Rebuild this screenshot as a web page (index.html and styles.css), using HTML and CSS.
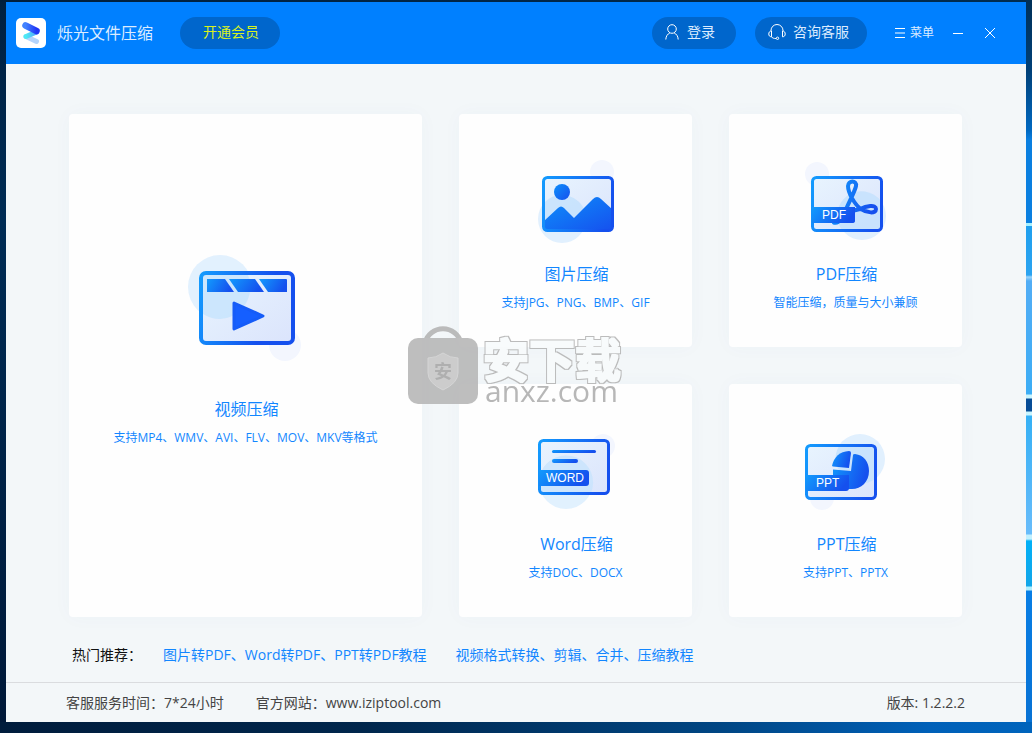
FILE: index.html
```html
<!DOCTYPE html>
<html lang="zh-CN">
<head>
<meta charset="utf-8">
<meta name="viewport" content="width=device-width, initial-scale=1">
<title>烁光文件压缩</title>
<link rel="stylesheet" href="styles.css">
</head>
<body>
<svg class="defs" width="0" height="0" aria-hidden="true">
  <defs>
    <linearGradient id="blue" x1="0" y1="0" x2="1" y2="0.3"><stop offset="0" stop-color="#129bfd"/><stop offset="1" stop-color="#1550ee"/></linearGradient>
    <linearGradient id="frame" gradientUnits="userSpaceOnUse" x1="0" y1="0" x2="72" y2="20"><stop offset="0" stop-color="#139dfe"/><stop offset="1" stop-color="#1550ee"/></linearGradient>
    <linearGradient id="deep" x1="0" y1="0" x2="1" y2="1"><stop offset="0" stop-color="#0d90fb"/><stop offset="1" stop-color="#1650ee"/></linearGradient>
    <linearGradient id="pale" x1="0" y1="0" x2="1" y2="1"><stop offset="0" stop-color="#e8f4fe"/><stop offset="1" stop-color="#dbe4fc"/></linearGradient>
    <filter id="outline" x="-5%" y="-10%" width="110%" height="120%" color-interpolation-filters="sRGB">
      <feMorphology in="SourceAlpha" operator="dilate" radius="2" result="outer"/>
      <feMorphology in="SourceGraphic" operator="dilate" radius="1" result="inner"/>
      <feFlood flood-color="#b5b5b5"/>
      <feComposite in2="outer" operator="in" result="edge"/>
      <feMerge><feMergeNode in="edge"/><feMergeNode in="inner"/></feMerge>
    </filter>
  </defs>
</svg>
<div class="window">
  <header class="titlebar">
    <svg class="logo" viewBox="0 0 30 30" width="30" height="30" aria-hidden="true">
      <defs>
        <linearGradient id="logo-a" x1="0" x2="1"><stop offset="0" stop-color="#4283ff"/><stop offset="1" stop-color="#2036f5"/></linearGradient>
        <linearGradient id="logo-b" x1="0" x2="1"><stop offset="0" stop-color="#4deaf4"/><stop offset="1" stop-color="#55a4fb"/></linearGradient>
      </defs>
      <rect width="30" height="30" rx="5" fill="#fff"/>
      <path d="M10 18.500 20.500 23.500" stroke="#b4d4fc" stroke-width="5" stroke-linecap="round"/>
      <path d="M10 18.500 20.500 14" stroke="url(#logo-b)" stroke-width="5" stroke-linecap="round"/>
      <path d="M9.500 7.500 20.500 13" stroke="url(#logo-a)" stroke-width="6.500" stroke-linecap="round"/>
    </svg>
    <h1 class="app-name">烁光文件压缩</h1>
    <button class="pill vip" type="button">开通会员</button>
    <button class="pill login" type="button">
      <svg width="14" height="16" viewBox="0 0 14 16" class="line-icon" aria-hidden="true"><circle cx="7" cy="5" r="4.300"/><path d="M.8 15.500c.2-3.300 1.700-5.500 4-6.500M13.200 15.500c-.2-3.300-1.700-5.500-4-6.500"/></svg>
      登录
    </button>
    <button class="pill support" type="button">
      <svg width="18" height="16" viewBox="0 0 18 16" class="line-icon" aria-hidden="true"><path d="M3 7V6.500a6 6 0 0 1 12 0V7M3.500 7C1.500 7 .8 8.500.8 10s.7 2.800 2.700 2.800V7ZM14.500 7c2 0 2.700 1.500 2.700 3s-.7 2.800-2.700 2.800V7ZM3.500 12.800c.8 1.300 2.400 1.700 4.500 1.700"/><circle cx="9.500" cy="14.300" r="1.200"/></svg>
      咨询客服
    </button>
    <button class="plain menu" type="button">
      <svg width="10" height="10" viewBox="0 0 10 10" class="line-icon" aria-hidden="true"><path d="M0 .5h10M0 5h10M0 9.500h10"/></svg>
      菜单
    </button>
    <button class="plain minimize" type="button" aria-label="最小化"><svg width="10" height="10" viewBox="0 0 10 10" class="line-icon" aria-hidden="true"><path d="M0 5.500h10"/></svg></button>
    <button class="plain close" type="button" aria-label="关闭"><svg width="10" height="10" viewBox="0 0 10 10" class="line-icon" aria-hidden="true"><path d="m0 0 10 10M10 0 0 10"/></svg></button>
  </header>

  <main class="content">
    <div class="cards">
      <button class="card card-video" type="button">
        <svg class="art art-video" width="116" height="108" viewBox="-11 -16 116 108" aria-hidden="true">
          <circle cx="21" cy="16" r="32" fill="#e2f1fe"/><circle cx="86" cy="74" r="16" fill="#f3f6fe"/>
          <rect x="2" y="2" width="92" height="70" rx="5" fill="url(#pale)"/>
          <path d="M4 4H49A32 32 0 0 1 21 48 32 32 0 0 1 4 43Z" fill="#c5e4fd" opacity=".8"/>
          <rect x="2" y="2" width="92" height="70" rx="5" fill="none" stroke="url(#frame)" stroke-width="4"/>
          <path d="M8 8H26L35 21H8Z" fill="url(#blue)"/><path d="M30 8H56L65 21H39Z" fill="url(#blue)"/><path d="M60 8H87Q88 8 88 9V21H69Z" fill="url(#blue)"/>
          <path d="M35 32 64 45 35 58Z" fill="#155fff" stroke="#155cf8" stroke-width="3" stroke-linejoin="round"/>
        </svg>
        <span class="card-title">视频压缩</span>
        <span class="card-note">支持MP4、WMV、AVI、FLV、MOV、MKV等格式</span>
      </button>
      <button class="card" type="button">
        <svg class="art" width="88" height="88" viewBox="-10 -16 88 88" aria-hidden="true">
          <circle cx="60" cy="-4" r="12" fill="#f3f6fe"/><circle cx="20" cy="43" r="24" fill="#e1f0fe"/>
          <rect x="1.500" y="1.500" width="69" height="53" rx="4" fill="url(#pale)"/>
          <path d="M3 26A24 24 0 0 1 43 36L42 54H3Z" fill="#c3e1fd" opacity=".8"/>
          <path d="M2 45 16 32Q19 29 22 32L32 42 51 23Q55 19 59 23L71 34V52Q71 55 68 55H4Q1 55 1 52Z" fill="url(#deep)"/>
          <rect x="1.500" y="1.500" width="69" height="53" rx="4" fill="none" stroke="url(#frame)" stroke-width="3"/>
          <circle cx="20" cy="16" r="8" fill="url(#deep)"/>
        </svg>
        <span class="card-title">图片压缩</span>
        <span class="card-note">支持JPG、PNG、BMP、GIF</span>
      </button>
      <button class="card" type="button">
        <svg class="art" width="88" height="88" viewBox="-9 -16 88 88" aria-hidden="true">
          <circle cx="6" cy="-2" r="12" fill="#f3f6fe"/><circle cx="51" cy="40" r="24" fill="#e1f0fe"/>
          <rect x="1.500" y="1.500" width="69" height="53" rx="4" fill="url(#pale)"/>
          <path d="M31 54A24 24 0 0 1 70 25V54Z" fill="#c3e1fd" opacity=".8"/>
          <rect x="1.500" y="1.500" width="69" height="53" rx="4" fill="none" stroke="url(#frame)" stroke-width="3"/>
          <path d="M22 46C28 50 33 38 36 31 39 24 44 15 45 10 46 4 37 4 37 10 37 17 44 29 50 33 56 37 65 38 65 33 65 28 55 30 49 33L33 37" fill="none" stroke="url(#blue)" stroke-width="4" stroke-linejoin="round"/>
          <path d="M1 31H44V45Q44 47 41 47H1Z" fill="url(#blue)"/>
          <text x="11" y="43" class="tag">PDF</text>
        </svg>
        <span class="card-title">PDF压缩</span>
        <span class="card-note">智能压缩，质量与大小兼顾</span>
      </button>
      <button class="card" type="button">
        <svg class="art" width="88" height="88" viewBox="-6 -9 88 88" aria-hidden="true">
          <circle cx="65" cy="7" r="12" fill="#f3f6fe"/><circle cx="28" cy="43" r="27" fill="#e1f1fe"/>
          <rect x="1.500" y="1.500" width="69" height="53" rx="4" fill="url(#pale)"/>
          <path d="M3 33A27 27 0 0 1 53 54H3Z" fill="#c8e4fd" opacity=".8"/>
          <rect x="1.500" y="1.500" width="69" height="53" rx="4" fill="none" stroke="url(#frame)" stroke-width="3"/>
          <rect x="14" y="11" width="44" height="3" rx="1.500" fill="url(#blue)"/><rect x="14" y="20" width="26" height="4" rx="2" fill="url(#blue)"/>
          <path d="M1 31H48Q51 31 51 34V44Q51 47 48 47H1Z" fill="url(#blue)"/>
          <text x="8" y="43" class="tag">WORD</text>
        </svg>
        <span class="card-title">Word压缩</span>
        <span class="card-note">支持DOC、DOCX</span>
      </button>
      <button class="card" type="button">
        <svg class="art" width="88" height="88" viewBox="-3 -14 88 88" aria-hidden="true">
          <circle cx="55" cy="15" r="25" fill="#e1f0fe"/><circle cx="17" cy="54" r="12" fill="#f3f6fe"/>
          <rect x="1.500" y="1.500" width="69" height="53" rx="4" fill="url(#pale)"/>
          <path d="M34 2H70V35A25 25 0 0 1 34 2Z" fill="#c3e1fd" opacity=".8"/>
          <rect x="1.500" y="1.500" width="69" height="53" rx="4" fill="none" stroke="url(#frame)" stroke-width="3"/>
          <path d="M27 22Q30 8 44 7Q46 7 46 9L44 24 28 22.500Z" fill="url(#blue)"/>
          <path d="M50 10C59 11 64 18 64 27 64 38 56 45 47 45H40L28 35V25.500L46 27 48 11Q48 10 50 10Z" fill="url(#blue)"/>
          <path d="M1 31H44V44Q44 47 41 47H1Z" fill="url(#blue)"/>
          <text x="11" y="43" class="tag">PPT</text>
        </svg>
        <span class="card-title">PPT压缩</span>
        <span class="card-note">支持PPT、PPTX</span>
      </button>
      <svg class="watermark" width="220" height="90" viewBox="0 0 220 90" aria-hidden="true">
        <path d="M18 20A18.500 18.500 0 0 1 54 20" fill="none" stroke="#b5b5b5" stroke-width="5"/>
        <rect x="1" y="15" width="70" height="66" rx="10" fill="#b8b8b8"/>
        <path d="M36 30Q43 35 51 35V50Q51 60 36 67 21 60 21 50V35Q29 35 36 30Z" fill="#c8c8c8" stroke="#d2d2d2"/>
        <text x="27" y="55" class="mark-small">安</text>
        <text x="76" y="54" class="mark-line" filter="url(#outline)">安下载</text>
        <text x="78" y="79" class="mark-url">anxz.com</text>
      </svg>
    </div>
    <nav class="recommend" aria-label="热门推荐">
      <span class="recommend-label">热门推荐：</span>
      <a href="#pdf">图片转PDF、Word转PDF、PPT转PDF教程</a>
      <a href="#video">视频格式转换、剪辑、合并、压缩教程</a>
    </nav>
  </main>

  <footer class="statusbar">
    <span>客服服务时间：7*24小时</span>
    <span>官方网站：www.iziptool.com</span>
    <span class="version">版本: 1.2.2.2</span>
  </footer>
</div>
</body>
</html>
```
FILE: styles.css
```css
* { box-sizing: border-box; }

body {
  margin: 0;
  min-height: 100vh;
  padding: 2px 6px 11px;
  display: flex;
  font-family: "Open Sans", "Noto Sans CJK SC", sans-serif;
  font-size: 14px;
  line-height: 20px;
  color: #444;
  background:
    linear-gradient(#003058 0, #004078 70px, #0068c0 130px, #0a7fe0 140px, #0a7fe0 223px, #a5f0ff 223px, #a5f0ff 226px, #1f9fee 226px, #2ba3f0 275px, #9ad4fb 277px, #52adf5 281px, #3cadf5 394px, #c8f5ff 395px, #c8f5ff 398px, #064c96 399px, #064c96 411px, #c8f5ff 412px, #c8f5ff 415px, #35b0f5 416px, #68bcfa 534px, #c0f0ff 535px, #c0f0ff 539px, #02b0f7 541px, #12a5e8 586px, #aeeeff 587px, #aeeeff 590px, #087ee5 591px, #0872d4 722px, #0064bc 722px) right top / 6px 100% no-repeat,
    linear-gradient(90deg, #001c3c, #00264c 35%, #004684 70%, #0060b8 90%, #0064bc) left bottom / 100% 11px no-repeat,
    linear-gradient(90deg, #001f3d, #002c50) left top / 100% 2px no-repeat,
    linear-gradient(#002040, #002c55 30%, #001838);
}

button { border: 0; padding: 0; font: inherit; color: inherit; cursor: pointer; }

.defs { position: absolute; }

.window { flex: 1; display: flex; flex-direction: column; background: #f3f7f9; }

.titlebar {
  display: flex;
  align-items: center;
  height: 62px;
  padding: 0 31px 0 10px;
  color: #dcecff;
  background: #0080ff;
}
.logo { margin-right: 11px; }
.app-name { margin: 0 27px 0 0; font-size: 16px; line-height: 24px; font-weight: 400; }
.pill {
  display: flex;
  align-items: center;
  height: 32px;
  padding: 0 0 2px 13px;
  border-radius: 16px;
  background: #0066cc;
}
.vip { width: 100px; padding-left: 23px; color: #d9f21d; }
.login { width: 84px; gap: 8px; margin-left: auto; }
.support { width: 112px; gap: 7px; margin-left: 19px; }
.line-icon { fill: none; stroke: #fff; stroke-width: 1; }
.plain { display: flex; align-items: center; gap: 5px; background: none; }
.menu { margin-left: 28px; font-size: 12px; }
.minimize { margin-left: 19px; }
.close { margin-left: 22px; }

.content { flex: 1; display: flex; flex-direction: column; padding: 50px 64px 0 63px; }
.cards {
  flex: 1;
  position: relative;
  display: grid;
  grid-template-columns: 353fr 233fr 233fr;
  grid-template-rows: 1fr 1fr;
  gap: 37px;
}
.card {
  display: flex;
  flex-direction: column;
  align-items: center;
  justify-content: flex-start;
  padding-top: 46px;
  border-radius: 4px;
  color: #1286ff;
  background: #fefefe;
  box-shadow: 0 0 20px rgba(0, 100, 160, 0.03);
}
.card-video { grid-row: 1 / 3; padding-top: 141px; }
.card-title { margin-top: 14px; padding-left: 2px; font-size: 16px; line-height: 24px; }
.card-note { margin-top: 7px; font-size: 12px; line-height: 20px; }
.art-video { margin-bottom: 20px; }
.tag { font: 12px "Liberation Sans", sans-serif; fill: #fff; }

.watermark { position: absolute; left: 338px; top: 209px; opacity: 0.9; pointer-events: none; }
.mark-line { font: 700 46px "Noto Sans CJK SC", sans-serif; fill: #f8fbfc; }
.mark-small { font: 700 18px "Noto Sans CJK SC", sans-serif; fill: #a8a8a8; }
.mark-url { font: 500 30px "Open Sans", sans-serif; fill: #b0b0b0; }

.recommend { display: flex; gap: 29px; padding: 28px 3px 17px; }
.recommend-label { color: #111; margin-right: -8px; }
.recommend a { color: #1286ff; text-decoration: none; }

.statusbar {
  display: flex;
  gap: 32px;
  padding: 10px 61px 9px 60px;
  border-top: 1px solid #dadcdf;
}
.version { margin-left: auto; }
```
